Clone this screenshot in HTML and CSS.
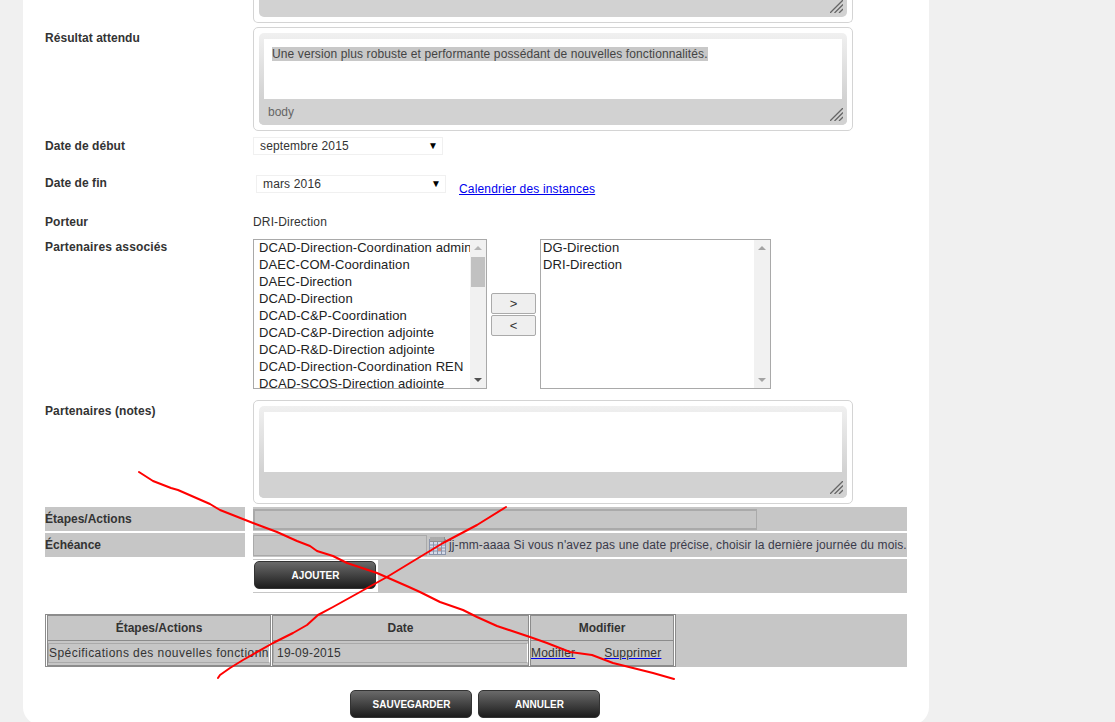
FILE: index.html
```html
<!DOCTYPE html>
<html lang="fr">
<head>
    <meta charset="UTF-8">
    <title>Fiche projet</title>
    <link rel="stylesheet" href="styles.css">
</head>
<body>
    <div class="page">
        <div class="row row-cut">
            <div class="label"></div>
            <div class="editor-cut">
                <div class="editor-foot">
                    <span></span>
                    <svg class="grip" width="13" height="13" viewBox="0 0 13 13"><path d="M0 13 13 0M4.500 13 13 4.500M9 13 13 9" stroke="#666" stroke-width="1.300"/></svg>
                </div>
            </div>
        </div>

        <div class="row row-result">
            <div class="label">Résultat attendu</div>
            <div class="editor">
                <div class="editor-inner">
                    <div class="editor-text"><span class="selected">Une version plus robuste et performante possédant de nouvelles fonctionnalités.</span></div>
                    <div class="editor-foot">
                        <span>body</span>
                        <svg class="grip" width="13" height="13" viewBox="0 0 13 13"><path d="M0 13 13 0M4.500 13 13 4.500M9 13 13 9" stroke="#666" stroke-width="1.300"/></svg>
                    </div>
                </div>
            </div>
        </div>

        <div class="row row-start">
            <div class="label">Date de début</div>
            <div class="dropdown"><span>septembre 2015</span><span class="arrow">▼</span></div>
        </div>

        <div class="row row-end">
            <div class="label">Date de fin</div>
            <div class="dropdown dropdown-end"><span>mars 2016</span><span class="arrow">▼</span></div>
            <a class="calendar-link" href="#">Calendrier des instances</a>
        </div>

        <div class="row row-owner">
            <div class="label">Porteur</div>
            <div class="owner">DRI-Direction</div>
        </div>

        <div class="row row-partners">
            <div class="label">Partenaires associés</div>
            <div class="listbox listbox-left">
                <ul>
                    <li>DCAD-Direction-Coordination admin</li>
                    <li>DAEC-COM-Coordination</li>
                    <li>DAEC-Direction</li>
                    <li>DCAD-Direction</li>
                    <li>DCAD-C&amp;P-Coordination</li>
                    <li>DCAD-C&amp;P-Direction adjointe</li>
                    <li>DCAD-R&amp;D-Direction adjointe</li>
                    <li>DCAD-Direction-Coordination REN</li>
                    <li>DCAD-SCOS-Direction adjointe</li>
                </ul>
                <div class="scrollbar">
                    <i class="up"></i>
                    <b class="thumb"></b>
                    <i class="down"></i>
                </div>
            </div>
            <div class="move-btns">
                <button class="move-btn">&gt;</button>
                <button class="move-btn">&lt;</button>
            </div>
            <div class="listbox listbox-right">
                <ul>
                    <li>DG-Direction</li>
                    <li>DRI-Direction</li>
                </ul>
                <div class="scrollbar scrollbar-off">
                    <i class="up"></i>
                    <i class="down"></i>
                </div>
            </div>
        </div>

        <div class="row row-notes">
            <div class="label">Partenaires (notes)</div>
            <div class="editor">
                <div class="editor-inner">
                    <div class="editor-text"></div>
                    <div class="editor-foot">
                        <span></span>
                        <svg class="grip" width="13" height="13" viewBox="0 0 13 13"><path d="M0 13 13 0M4.500 13 13 4.500M9 13 13 9" stroke="#666" stroke-width="1.300"/></svg>
                    </div>
                </div>
            </div>
        </div>

        <div class="steps">
            <div class="step-label">Étapes/Actions</div>
            <div class="step-field"><div class="field field-long"></div></div>
            <div class="step-label">Échéance</div>
            <div class="step-field">
                <div class="field field-date"></div>
                <svg class="cal-icon" width="18" height="19" viewBox="0 0 18 19">
                    <rect x="0.500" y="2.500" width="16" height="15" fill="#d5dbe8" stroke="#8a94ab"/>
                    <rect x="1" y="0" width="15" height="5" fill="#8f8f8f"/>
                    <path d="M2 0v4M4 0v4M6 0v4M8 0v4M10 0v4M12 0v4M14 0v4" stroke="#c8c8c8"/>
                    <path d="M1 8h15M1 11h15M1 14h15M4.500 5v12M8.500 5v12M12.500 5v12" stroke="#8a94ab"/>
                    <rect x="9" y="11" width="3" height="3" fill="#d98a7a"/>
                </svg>
                <span class="date-hint">jj-mm-aaaa Si vous n'avez pas une date précise, choisir la dernière journée du mois.</span>
            </div>
            <div class="step-label step-empty"></div>
            <div class="step-field step-add"><div class="add-wrap"><button class="dark-btn">AJOUTER</button></div></div>
        </div>

        <div class="list-wrap">
            <table class="list">
                <tr>
                    <th class="col-step">Étapes/Actions</th>
                    <th class="col-date">Date</th>
                    <th class="col-edit">Modifier</th>
                </tr>
                <tr>
                    <td><div class="cell-input">Spécifications des nouvelles fonctionn</div></td>
                    <td><div class="cell-input cell-date">19-09-2015</div></td>
                    <td class="cell-links"><a href="#">Modifier</a><a href="#">Supprimer</a></td>
                </tr>
            </table>
        </div>

        <div class="actions">
            <button class="dark-btn">SAUVEGARDER</button>
            <button class="dark-btn">ANNULER</button>
        </div>

        <!-- traits rouges dessinés à la main par-dessus le formulaire -->
        <svg class="scribble" width="1115" height="722" viewBox="0 0 1115 722">
            <path d="M139 472 153 481 171 488 178 490 210 504 220 510 253 523 277 532 297 541 310 546 317 551 333 556 347 563 377 573 409 587 420 592 440 602 463 610 477 617 497 626 530 637 547 643 570 652 592 655 613 663 653 673 674 679"/>
            <path d="M506 507 477 525 443 543 410 563 387 577 360 592 333 607 318 615 307 625 293 633 273 643 243 660 230 668 220 675 218 678"/>
        </svg>
    </div>
</body>
</html>
```

FILE: styles.css
```css
html, body {
    margin: 0;
    padding: 0;
    height: 722px;
    overflow: hidden;
}
body {
    background-color: #f0f0f0;
    font-family: "Liberation Sans", Arial, sans-serif;
    font-size: 12px;
    color: #333;
}
.page {
    width: 862px;
    height: 725px;
    margin-left: 23px;
    padding: 0 22px;
    background-color: #fff;
    border-radius: 0 0 18px 18px;
}
.row {
    display: flex;
    align-items: flex-start;
}
.label {
    width: 208px;
    flex: none;
    font-weight: bold;
    line-height: 14px;
    letter-spacing: 0.050px;
}

/* editeurs */
.row-cut {
    height: 23px;
}
.editor-cut {
    width: 588px;
    height: 17px;
    padding: 0 5px 5px;
    border: 1px solid #d4d4d4;
    border-top: 0;
    border-radius: 0 0 5px 5px;
    box-sizing: content-box;
    background: #fff;
}
.editor-cut .editor-foot {
    height: 17px;
    margin: 0;
    background-color: #d2d2d2;
    border-radius: 0 0 5px 5px;
    padding: 0 4px 0 0;
    align-items: flex-start;
}
.editor-cut .grip {
    margin-top: 0;
}
.editor {
    width: 588px;
    padding: 5px;
    border: 1px solid #d4d4d4;
    border-radius: 5px;
}
.editor-inner {
    padding: 6px 5px 0;
    border-radius: 5px;
    background: linear-gradient(#f0f0f0, #d2d2d2 66px);
}
.editor-text {
    height: 60px;
    background-color: #fff;
    padding: 7px 8px 0;
    box-sizing: border-box;
    line-height: 16px;
    letter-spacing: 0.110px;
    color: #444;
}
.selected {
    background-color: #c8c8c8;
}
.editor-foot {
    display: flex;
    justify-content: space-between;
    align-items: flex-end;
    height: 26px;
    margin: 0 -5px;
    padding: 0 4px 4px 9px;
    box-sizing: border-box;
    background-color: #d2d2d2;
    border-radius: 0 0 5px 5px;
    color: #666;
    line-height: 18px;
}
.grip {
    display: block;
}
.row-result {
    margin-top: 4px;
}
.row-result .label {
    margin-top: 4px;
}

/* listes deroulantes */
.dropdown {
    display: flex;
    justify-content: space-between;
    width: 190px;
    height: 18px;
    padding: 0 4px 0 6px;
    box-sizing: border-box;
    border: 1px solid #f0f0f0;
    line-height: 16px;
    letter-spacing: 0.150px;
    color: #333;
}
.arrow {
    font-size: 10px;
    color: #000;
}
.row-start {
    margin-top: 6px;
}
.row-start .label {
    margin-top: 2px;
}
.row-end {
    margin-top: 20px;
}
.row-end .label {
    margin-top: 1px;
}
.dropdown-end {
    margin-left: 3px;
}
.calendar-link {
    margin: 7px 0 0 13px;
    color: #00e;
    line-height: 14px;
    letter-spacing: 0.170px;
}
.row-owner {
    margin-top: 19px;
}
.owner {
    line-height: 14px;
    letter-spacing: 0.150px;
}

/* partenaires */
.row-partners {
    margin-top: 10px;
}
.row-partners .label {
    margin-top: 1px;
    letter-spacing: 0.150px;
}
.listbox {
    display: flex;
    height: 150px;
    box-sizing: border-box;
    border: 1px solid #a9a9a9;
    overflow: hidden;
    font-size: 13px;
    letter-spacing: 0.090px;
    color: #222;
}
.listbox ul {
    flex: 1;
    min-width: 0;
    margin: 0;
    padding: 0;
    list-style: none;
    overflow: hidden;
    white-space: nowrap;
}
.listbox li {
    height: 17px;
    line-height: 15px;
    padding-left: 5px;
}
.listbox-left {
    width: 234px;
}
.listbox-right {
    width: 231px;
    margin-left: 4px;
}
.listbox-right li {
    padding-left: 2px;
}
.scrollbar {
    width: 16px;
    flex: none;
    display: flex;
    flex-direction: column;
    align-items: center;
    background-color: #f1f1f1;
}
.scrollbar .up,
.scrollbar .down {
    width: 0;
    height: 0;
    border-left: 4px solid transparent;
    border-right: 4px solid transparent;
}
.scrollbar .up {
    margin-top: 6px;
    border-bottom: 4px solid #b5b5b5;
}
.scrollbar .down {
    margin-top: auto;
    margin-bottom: 6px;
    border-top: 4px solid #505050;
}
.scrollbar-off .up {
    border-bottom-color: #a3a3a3;
}
.scrollbar-off .down {
    border-top-color: #a3a3a3;
}
.thumb {
    width: 14px;
    height: 30px;
    margin-top: 7px;
    background-color: #c1c1c1;
}
.move-btns {
    display: flex;
    flex-direction: column;
    gap: 1px;
    margin: 54px 0 0 4px;
}
.move-btn {
    width: 45px;
    height: 21px;
    padding: 0;
    background-color: #efefef;
    border: 1px solid #aaa;
    border-radius: 2px;
    font-family: "Liberation Sans", Arial, sans-serif;
    font-size: 13px;
    color: #333;
}

.row-notes {
    margin-top: 11px;
}
.row-notes .label {
    margin-top: 4px;
    letter-spacing: 0.100px;
}

/* etapes */
.steps {
    display: grid;
    grid-template-columns: 200px 654px;
    column-gap: 8px;
    row-gap: 2px;
    margin-top: 3px;
}
.step-label {
    background-color: #c6c6c6;
    height: 24px;
    line-height: 24px;
    font-weight: bold;
}
.step-empty {
    background: none;
}
.step-field {
    display: flex;
    align-items: center;
    background-color: #c6c6c6;
    height: 24px;
    white-space: nowrap;
}
.field {
    height: 21px;
    box-sizing: border-box;
    border: 2px solid #aaa;
    border-right-width: 1px;
    background-color: #c6c6c6;
}
.field-long {
    width: 504px;
}
.field-date {
    width: 174px;
    border-width: 1px;
}
.cal-icon {
    margin: 3px 2px 0 2px;
    flex: none;
}
.date-hint {
    line-height: 14px;
    letter-spacing: 0.110px;
    color: #3a3a4a;
}
.step-add {
    height: 34px;
    align-items: flex-start;
}
.add-wrap {
    background-color: #fff;
    margin-top: 1px;
    padding: 1px 2px 3px 1px;
    display: flex;
}
.dark-btn {
    width: 122px;
    height: 28px;
    padding: 1px 0 0 1px;
    border: 1px solid #333;
    border-radius: 5px;
    background: linear-gradient(#6a6a6a, #1c1c1c);
    color: #fff;
    font-family: "Liberation Sans", Arial, sans-serif;
    font-size: 10px;
    font-weight: bold;
}

/* tableau */
.list-wrap {
    margin-top: 21px;
    height: 53px;
    background-color: #c6c6c6;
}
.list {
    width: 631px;
    height: 53px;
    table-layout: fixed;
    border-collapse: separate;
    border-spacing: 1px 0;
    border: 1px solid #8c8c8c;
    background-color: #fff;
}
.list th,
.list td {
    background-color: #c6c6c6;
    padding: 0;
    border: 1px solid #8c8c8c;
}
.list td {
    border-top: 0;
}
.list th {
    height: 24px;
    font-weight: bold;
}
.col-step {
    width: 222px;
}
.col-date {
    width: 255px;
}
.cell-input {
    border: 1px solid #aaa;
    border-right-color: #fff;
    height: 20px;
    line-height: 18px;
    overflow: hidden;
    white-space: nowrap;
    letter-spacing: 0.450px;
    box-sizing: border-box;
}
.cell-date {
    padding-left: 3px;
    letter-spacing: 0.250px;
}
.cell-links a {
    color: #333;
    text-decoration-color: #00e;
    letter-spacing: 0.200px;
}
.cell-links a + a {
    margin-left: 29px;
}

.actions {
    display: flex;
    justify-content: center;
    gap: 6px;
    margin-top: 23px;
    padding-right: 2px;
}

/* superposition */
.scribble {
    position: absolute;
    left: 0;
    top: 0;
    pointer-events: none;
}
.scribble path {
    fill: none;
    stroke: #f00;
    stroke-width: 2;
    stroke-linejoin: round;
    stroke-linecap: round;
}
```
